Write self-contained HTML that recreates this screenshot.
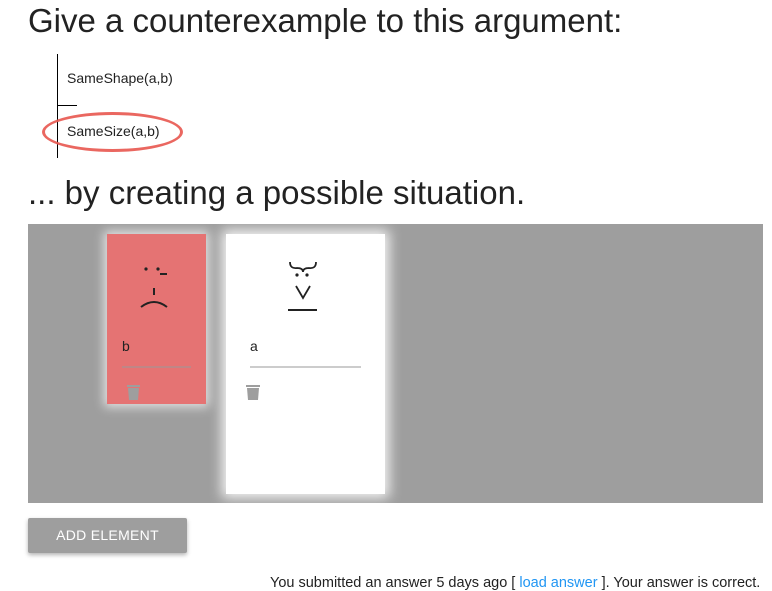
<!DOCTYPE html>
<html><head><meta charset="utf-8"><style>
body{margin:0;width:772px;height:588px;background:#fff;font-family:"Liberation Sans",sans-serif;color:#222;position:relative;overflow:hidden}
.a{position:absolute}
h1{position:absolute;margin:0;font-weight:normal;font-size:33px;white-space:nowrap;color:#222}
.sm{font-size:14px;color:#222}
</style></head><body>
<h1 style="left:28px;top:2px">Give a counterexample to this argument:</h1>
<div class="a" style="left:57px;top:54px;width:1px;height:104px;background:#000"></div>
<div class="a" style="left:57px;top:105px;width:20px;height:1px;background:#000"></div>
<div class="a sm" style="left:67px;top:70px">SameShape(a,b)</div>
<div class="a sm" style="left:67px;top:123px">SameSize(a,b)</div>
<div class="a" style="left:42px;top:112px;width:141px;height:40px;border:3px solid #e8564f;border-radius:50%;box-sizing:border-box;opacity:.9"></div>
<h1 style="left:28px;top:174px">... by creating a possible situation.</h1>
<div class="a" style="left:28px;top:224px;width:735px;height:279px;background:#9e9e9e"></div>
<div class="a" style="left:107px;top:234px;width:99px;height:170px;background:#e57373;box-shadow:0 0 10px 3px rgba(255,255,255,.7)">
<svg width="99" height="170" style="position:absolute;left:0;top:0">
<circle cx="39" cy="35" r="1.6" fill="#222"/><circle cx="51" cy="35" r="1.6" fill="#222"/>
<line x1="53" y1="40" x2="60" y2="40" stroke="#222" stroke-width="2"/>
<line x1="47" y1="54" x2="47" y2="61" stroke="#222" stroke-width="2"/>
<path d="M34 73 Q47 63 60 73" stroke="#222" stroke-width="2" fill="none"/>
<line x1="15" y1="133" x2="84" y2="133" stroke="#999" stroke-width="1"/>
<rect x="20" y="151" width="13" height="2" fill="#9e9e9e"/><path d="M21 154h11l-1 12h-9z" fill="#9e9e9e"/>
</svg>
<div class="a sm" style="left:15px;top:104px">b</div>
</div>
<div class="a" style="left:226px;top:234px;width:159px;height:260px;background:#fff;box-shadow:0 0 12px 4px rgba(255,255,255,.9)">
<svg width="159" height="260" style="position:absolute;left:0;top:0">
<path d="M64 28 Q64 35 71 34 Q77 34 77 38 Q77 34 83 34 Q90 35 90 28" stroke="#222" stroke-width="1.8" fill="none"/>
<circle cx="71" cy="41" r="1.6" fill="#222"/><circle cx="81" cy="41" r="1.6" fill="#222"/>
<path d="M70 52 L77 64 L84 52" stroke="#222" stroke-width="1.8" fill="none"/>
<line x1="62" y1="76" x2="91" y2="76" stroke="#222" stroke-width="2"/>
<line x1="24" y1="133" x2="135" y2="133" stroke="#999" stroke-width="1"/>
<rect x="20" y="151" width="14" height="2" fill="#9e9e9e"/><path d="M21 154h12l-1 12h-10z" fill="#9e9e9e"/>
</svg>
<div class="a sm" style="left:24px;top:104px">a</div>
</div>
<div class="a" style="left:28px;top:518px;width:159px;height:35px;background:#9e9e9e;border-radius:2px;box-shadow:0 2px 4px rgba(0,0,0,.3);color:#fff;font-size:14px;text-align:center;line-height:35px;letter-spacing:.3px">ADD ELEMENT</div>
<div class="a" style="left:270px;top:575px;font-size:14.5px;color:#222;white-space:nowrap">You submitted an answer 5 days ago [ <span style="color:#2196f3">load answer</span> ]. Your answer is correct.</div>
</body></html>
